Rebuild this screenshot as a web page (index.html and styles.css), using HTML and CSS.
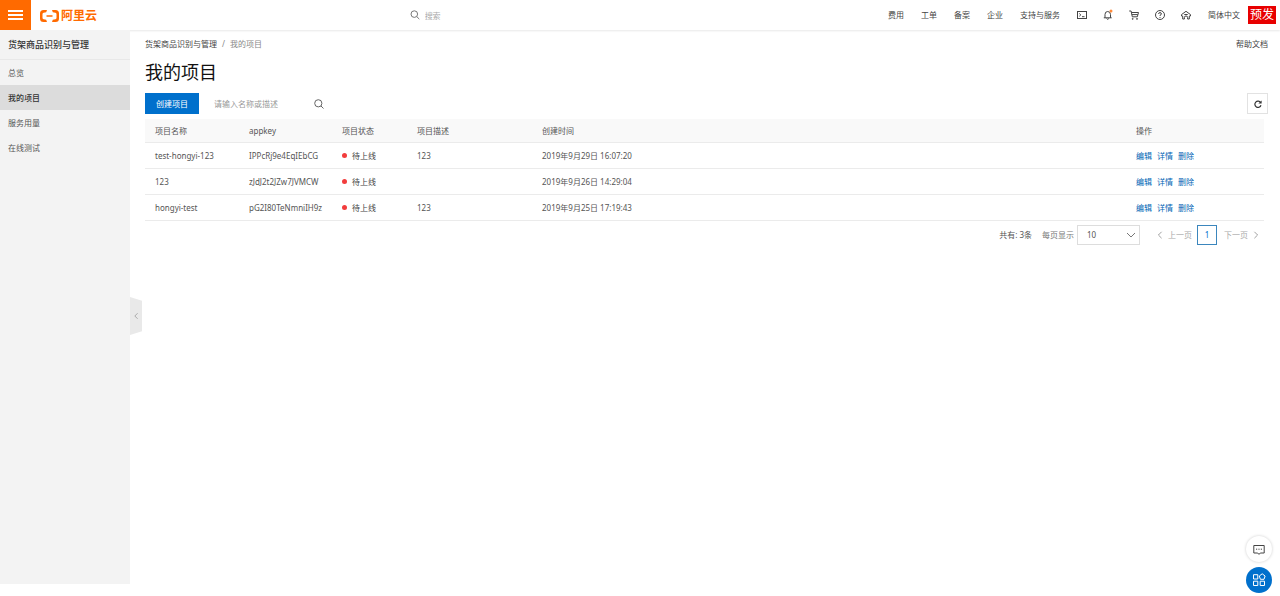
FILE: index.html
```html
<!DOCTYPE html>
<html lang="zh-CN">
<head>
<meta charset="utf-8">
<title>我的项目</title>
<link rel="stylesheet" href="styles.css">
</head>
<body>
<header class="topbar">
  <button class="menu-button" type="button" aria-label="菜单"><span class="bar"></span><span class="bar"></span><span class="bar"></span></button>
  <a class="brand" href="#">
    <svg class="brand-mark" viewBox="0 0 21 14" aria-hidden="true"><path d="M8 1H4.500Q1 1 1 4.500v5Q1 13 4.500 13H8l-.8-2.200-2.600-.6Q3.500 9.900 3.500 9V5q0-.9 1.100-1.200l2.600-.6zM13 1h3.500Q20 1 20 4.500v5q0 3.500-3.500 3.500H13l.8-2.200 2.600-.6q1.100-.3 1.100-1.200V5q0-.9-1.100-1.200l-2.600-.6zM7.500 6.200h6v1.500h-6z"/></svg>
    <span class="brand-name">阿里云</span>
  </a>
  <label class="global-search">
    <svg class="icon" viewBox="0 0 10 10" aria-hidden="true"><circle cx="4.300" cy="4.100" r="3.300"/><path d="M6.700 6.500 9.300 9.100"/></svg>
    <input class="global-input" type="search" placeholder="搜索" aria-label="搜索">
  </label>
  <nav class="top-nav">
    <a href="#">费用</a><a href="#">工单</a><a href="#">备案</a><a href="#">企业</a><a href="#">支持与服务</a>
  </nav>
  <div class="top-icons">
    <button type="button" aria-label="命令行"><svg class="icon" viewBox="0 0 10 10"><rect x=".5" y="1.500" width="9" height="7"/><path d="m2.300 3.500 1.500 1.400-1.500 1.400M5 6.700h2.500"/></svg></button>
    <button type="button" aria-label="消息"><svg class="icon" viewBox="0 0 10 10"><path d="M.8 7.800h7.900M2 7.800V4.500Q2 1.500 4.700 1.500T7.500 4.500v3.300M3.700 8.300Q4.700 10.800 5.800 8.300"/><circle class="alert-dot" cx="8" cy="1" r="1.500"/></svg></button>
    <button type="button" aria-label="购物车"><svg class="icon" viewBox="0 0 10 10"><path d="M.2 1h1.900l1.200 5.800h5L9.500 2.500H2.500M2.800 4.600h6"/><circle cx="3.700" cy="8.900" r=".5"/><circle cx="8" cy="8.900" r=".5"/></svg></button>
    <button type="button" aria-label="帮助"><svg class="icon" viewBox="0 0 10 10"><circle cx="5" cy="5" r="4.500"/><path d="M3.600 4Q3.600 2.600 5 2.600T6.400 4Q6.400 4.700 5 5.300V6M5 7v.9"/></svg></button>
    <button type="button" aria-label="首页"><svg class="icon" viewBox="0 0 10 10"><path d="M5 1.300 9.500 4.600V6H8.300v3H6.600V7.300Q6.600 6 5 6T3.400 7.300V9H1.700V6H.5V4.600zM3.300 4.500h3.400"/></svg></button>
  </div>
  <a class="language" href="#">简体中文</a>
  <span class="env-tag">预发</span>
</header>
<div class="layout">
  <aside class="sidebar">
    <h2 class="side-title">货架商品识别与管理</h2>
    <nav class="side-nav">
      <a href="#">总览</a>
      <a class="current" href="#" aria-current="page">我的项目</a>
      <a href="#">服务用量</a>
      <a href="#">在线测试</a>
    </nav>
    <button class="collapse" type="button" aria-label="收起"><svg class="icon" viewBox="0 0 10 10"><path d="M7 1.500 3.500 5 7 8.500"/></svg></button>
  </aside>
  <main class="content">
    <div class="crumb-row">
      <nav class="crumbs"><a href="#">货架商品识别与管理</a><span>/</span><span>我的项目</span></nav>
      <a class="help-link" href="#">帮助文档</a>
    </div>
    <h1 class="page-title">我的项目</h1>
    <div class="toolbar">
      <button class="create" type="button">创建项目</button>
      <input class="filter-input" type="text" placeholder="请输入名称或描述" aria-label="请输入名称或描述">
      <button class="filter-button" type="button" aria-label="查询"><svg class="icon" viewBox="0 0 10 10"><circle cx="4.300" cy="4.300" r="3.600"/><path d="M7 7l2.500 2.500"/></svg></button>
      <button class="refresh" type="button" aria-label="刷新"><svg class="icon" viewBox="0 0 10 10"><path d="M8.300 3.300A3.900 3.900 0 1 0 8.700 6.500"/><path class="solid" d="M9.500.5v4H5.500z"/></svg></button>
    </div>
    <div class="results">
      <table class="projects">
        <colgroup><col class="col-name"><col class="col-key"><col class="col-state"><col class="col-desc"><col><col class="col-actions"></colgroup>
        <thead><tr><th>项目名称</th><th>appkey</th><th>项目状态</th><th>项目描述</th><th>创建时间</th><th>操作</th></tr></thead>
        <tbody>
          <tr><td>test-hongyi-123</td><td>IPPcRj9e4EqIEbCG</td><td><span class="state">待上线</span></td><td>123</td><td>2019年9月29日 16:07:20</td><td><div class="actions"><a href="#">编辑</a><a href="#">详情</a><a href="#">删除</a></div></td></tr>
          <tr><td>123</td><td>zJdJ2t2JZw7JVMCW</td><td><span class="state">待上线</span></td><td></td><td>2019年9月26日 14:29:04</td><td><div class="actions"><a href="#">编辑</a><a href="#">详情</a><a href="#">删除</a></div></td></tr>
          <tr><td>hongyi-test</td><td>pG2I80TeNmniIH9z</td><td><span class="state">待上线</span></td><td>123</td><td>2019年9月25日 17:19:43</td><td><div class="actions"><a href="#">编辑</a><a href="#">详情</a><a href="#">删除</a></div></td></tr>
        </tbody>
      </table>
      <div class="pager">
        <span class="total">共有: 3条</span>
        <label class="size-label" for="page-size">每页显示</label>
        <div class="select-box">
          <select id="page-size"><option>10</option><option>20</option><option>50</option></select>
          <svg class="icon select-arrow" viewBox="0 0 10 10" aria-hidden="true"><path d="m1 3 4 4 4-4"/></svg>
        </div>
        <button class="step" type="button" disabled><svg class="icon" viewBox="0 0 10 10"><path d="M7 1 3 5l4 4"/></svg>上一页</button>
        <button class="page" type="button" aria-current="page">1</button>
        <button class="step" type="button" disabled>下一页<svg class="icon" viewBox="0 0 10 10"><path d="m3 1 4 4-4 4"/></svg></button>
      </div>
    </div>
  </main>
</div>
<div class="floaters">
  <button class="float-button" type="button" aria-label="反馈"><svg class="icon" viewBox="0 0 12 12"><path d="M.8 2.500h10.400V10H7.300L6 11.400 4.700 10H.8z"/><path d="M3 6.200h1.200M5.400 6.200h1.200M7.800 6.200H9"/></svg></button>
  <button class="float-button primary" type="button" aria-label="应用"><svg class="icon" viewBox="0 0 12 12"><path d="M.5.7h4.300V5H.5zM.5 7.200h4.300v4.300H.5zM7.200 7.200h4.300v4.300H7.200zM9.200-.2l2.900 2.200-1.100 3.300H7.400L6.300 2z"/></svg></button>
</div>
</body>
</html>
```
FILE: styles.css
```css
* { box-sizing: border-box; }
body {
  margin: 0;
  min-height: 100vh;
  display: flex;
  flex-direction: column;
  background: #fff;
  color: #555;
  font: 8px/12px "Noto Sans", "Noto Sans CJK SC", sans-serif;
}
a { color: inherit; text-decoration: none; }
button, input, select { font: inherit; color: inherit; border: 0; padding: 0; background: none; border-radius: 0; outline: 0; }
button { display: flex; align-items: center; justify-content: center; cursor: pointer; }
h1, h2 { margin: 0; }
input::placeholder { color: #999; opacity: 1; }
.icon { width: 10px; height: 10px; fill: none; stroke: currentColor; stroke-width: 1; overflow: visible; flex: none; }

.topbar { display: flex; align-items: center; height: 30px; padding-right: 4px; box-shadow: 0 1px 2px #e8e8e8; color: #444; }
.menu-button { width: 31px; height: 30px; flex-direction: column; gap: 2px; background: #ff6a00; }
.bar { width: 15px; height: 2px; background: #fff; }
.brand { display: flex; align-items: center; gap: 1px; margin-left: 8px; padding-top: 2px; color: #ff6a00; }
.brand-mark { width: 21px; height: 14px; fill: currentColor; }
.brand-name { font-size: 12px; line-height: 16px; font-weight: 700; }
.global-search { display: flex; align-items: center; gap: 5px; margin-left: 24.5%; color: #777; }
.global-input { width: 120px; height: 14px; }
.global-input::placeholder { color: #aaa; }
.top-nav { display: flex; gap: 17px; margin-left: auto; }
.top-icons { display: flex; gap: 16px; margin: 0 17px; }
.alert-dot { fill: #ff8a3a; stroke: none; }
.env-tag { margin-left: 8px; padding: 0 2px; background: #e80000; color: #fff; font-size: 12px; line-height: 18px; }

.layout { display: flex; flex: 1; }
.sidebar { position: relative; width: 130px; flex: none; margin-bottom: 12px; background: #f3f3f3; }
.side-title { height: 30px; padding-left: 8px; border-bottom: 1px solid #e8e8e8; font-size: 9px; line-height: 30px; font-weight: 500; color: #333; }
.side-nav { display: flex; flex-direction: column; }
.side-nav a { height: 25px; padding-left: 8px; line-height: 26px; }
.side-nav .current { background: #dcdcdc; color: #333; font-weight: 500; }
.collapse { position: absolute; left: 100%; top: 50%; width: 12px; height: 38px; margin-top: -10px; background: #e9e9e9; color: #999; clip-path: polygon(0 0, 100% 10%, 100% 90%, 0 100%); }
.collapse .icon { width: 8px; height: 8px; }

.content { flex: 1; min-width: 0; padding: 8px 12px 0 15px; }
.crumb-row { display: flex; justify-content: space-between; color: #444; }
.crumbs { display: flex; gap: 5px; color: #888; }
.crumbs a { color: #444; }
.page-title { margin-top: 10px; font-size: 18px; line-height: 24px; font-weight: 400; color: #111; }
.toolbar { display: flex; align-items: center; margin-top: 9px; }
.create { width: 54px; height: 21px; background: #0070cc; color: #fff; }
.filter-input { width: 98px; height: 20px; margin-left: 15px; }
.filter-button { width: 14px; height: 20px; color: #666; }
.refresh { width: 21px; height: 21px; margin-left: auto; border: 1px solid #e2e2e2; color: #333; }
.refresh .icon { width: 8px; height: 8px; stroke-width: 1.5; }
.refresh .solid { fill: currentColor; stroke: none; }
.results { margin: 5px 4px 0 0; }
.projects { width: 100%; table-layout: fixed; border-collapse: separate; border-spacing: 0; }
.projects th, .projects td { height: 26px; padding: 0 0 0 10px; border-bottom: 1px solid #ebebeb; text-align: left; font-weight: 400; white-space: nowrap; }
.projects th { height: 24px; background: #f9f9f9; }
.col-name { width: 94px; }
.col-key { width: 93px; }
.col-state { width: 75px; }
.col-desc { width: 125px; }
.col-actions { width: 138px; }
.state { display: flex; align-items: center; gap: 5px; color: #444; }
.state::before { content: ""; width: 5px; height: 5px; border-radius: 50%; background: #f23c3c; }
.actions { display: flex; gap: 5px; color: #0064b4; }
.pager { display: flex; align-items: center; justify-content: flex-end; margin-top: 4px; padding-right: 4px; }
.size-label { margin-left: 10px; color: #777; }
.select-box { position: relative; margin-left: 3px; }
.select-box select { appearance: none; width: 63px; height: 20px; padding-left: 9px; border: 1px solid #ddd; background: #fff; }
.select-arrow { position: absolute; right: 4px; top: 5px; pointer-events: none; color: #777; }
.step { gap: 4px; color: #aaa; }
.step .icon { width: 8px; height: 8px; color: #888; }
.select-box + .step { margin-left: 16px; }
.page { width: 20px; height: 20px; margin: 0 7px 0 5px; border: 1px solid #3b86bd; color: #0070cc; }

.floaters { position: fixed; right: 8px; bottom: 3px; display: flex; flex-direction: column; gap: 5px; }
.float-button { width: 26px; height: 26px; border-radius: 50%; background: #fff; color: #444; box-shadow: 0 0 3px #ccc; }
.float-button .icon { width: 12px; height: 12px; }
.primary { background: #0070cc; color: #fff; box-shadow: none; }
```
